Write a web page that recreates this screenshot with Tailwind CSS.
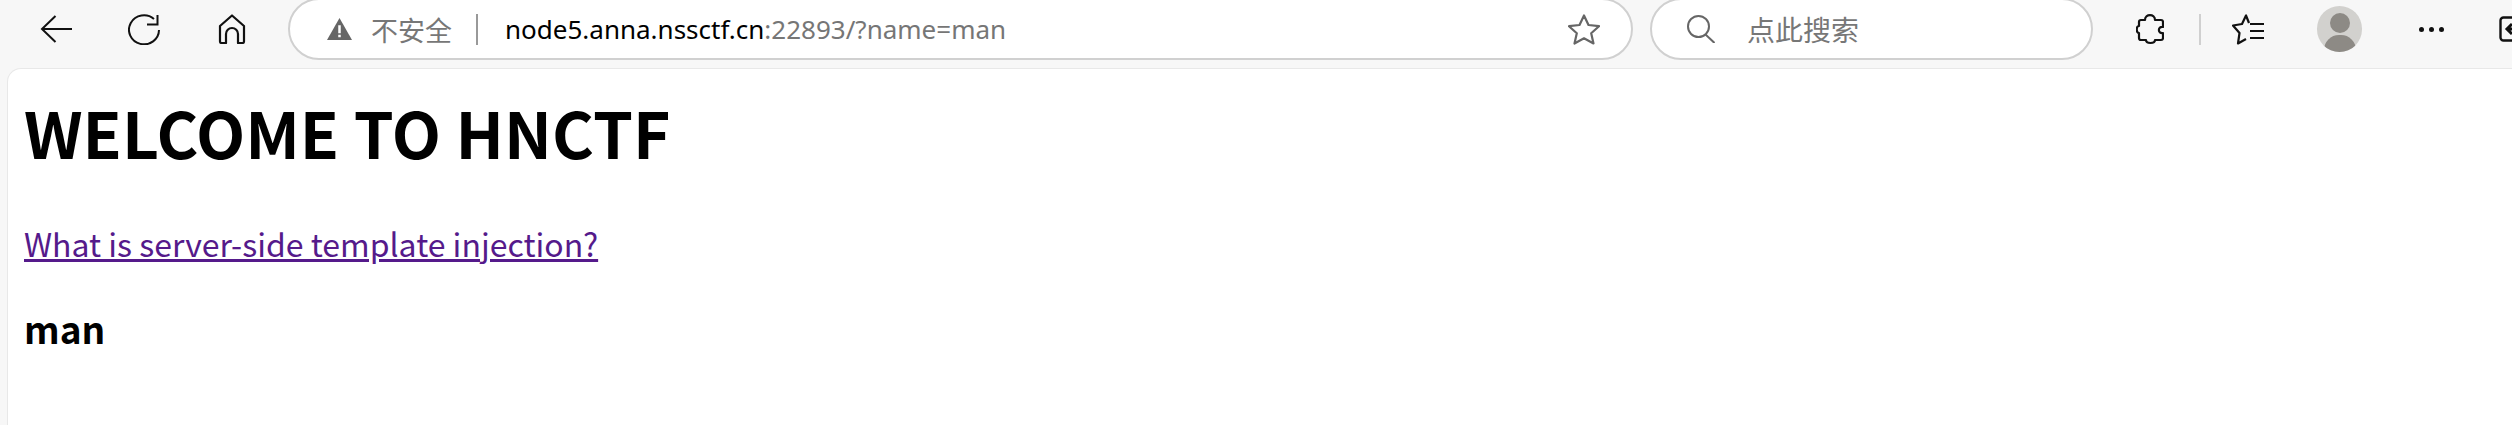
<!DOCTYPE html>
<html lang="en">
<head>
    <meta charset="UTF-8">
    <title>HNCTF</title>
    <script src="https://cdn.jsdelivr.net/npm/@tailwindcss/browser@4"></script>
</head>
<body class="h-[425px] w-[2512px] overflow-hidden bg-[#f7f7f7] font-['Noto_Sans_CJK_SC','Noto_Sans',sans-serif]">
    <!-- toolbar -->
    <header class="flex h-[68px] items-start">
        <div class="flex h-[58px] w-[288px] shrink-0 items-center text-[#111]">
            <button class="ml-[40px]">
                <svg class="block" width="32" height="28" viewBox="0 0 32 28" fill="none" stroke="currentColor" stroke-width="2"><path d="M2 14H32M15.500 1 2 14 15.500 27"/></svg>
            </button>
            <button class="ml-[56px]">
                <svg class="block" width="32" height="31" viewBox="0 0 32 31" fill="none" stroke="currentColor" stroke-width="2"><path d="M31 16a15 14.500 0 1 1-5-11M29.500 1v9.500H19"/></svg>
            </button>
            <button class="ml-[58px]">
                <svg class="block" width="28" height="30" viewBox="0 0 28 30" fill="none" stroke="currentColor" stroke-width="2.200" stroke-linejoin="round"><path d="M2 12 14 1.500 26 12v15.500a1.500 1.500 0 0 1-1.500 1.500H20v-9a6 6 0 0 0-12 0v9H3.500A1.500 1.500 0 0 1 2 27.500Z"/></svg>
            </button>
        </div>

        <!-- address bar -->
        <div class="-mt-[2px] flex h-[62px] w-[1345px] shrink-0 items-center rounded-[31px] border-2 border-[#d0d0d0] bg-white pl-[37px] pr-[31px]">
            <svg class="block" width="25" height="22" viewBox="0 0 24 21"><path d="M12 0 24 21H0Z" fill="#666"/><path d="M10.800 7h2.400v7.500h-2.400Zm0 9h2.400v2.400h-2.400Z" fill="#fff"/></svg>
            <span class="ml-[19px] text-[27px] leading-none text-[#777]">不安全</span>
            <span class="ml-[24px] h-[31px] w-[2px] bg-[#999]"></span>
            <span class="ml-[27px] font-['Noto_Sans',sans-serif] text-[26px] leading-none text-black">node5.anna.nssctf.cn<span class="text-[#767676]">:22893/?name=man</span></span>
            <svg class="ml-auto block" width="32" height="31" viewBox="0 0 32 31" fill="none" stroke="#666" stroke-width="2.200" stroke-linejoin="round"><path d="m16 1.500 4.500 9.500 10.500 1.200-7.800 7.100 2.300 10.200L16 24.300 6.500 29.500l2.300-10.200L1 12.200 11.500 11Z"/></svg>
        </div>

        <!-- search box -->
        <div class="-mt-[2px] ml-[17px] flex h-[62px] w-[443px] shrink-0 items-center rounded-[31px] border-2 border-[#d0d0d0] bg-white pl-[35px]">
            <svg class="block" width="28" height="28" viewBox="0 0 28 28" fill="none" stroke="#666" stroke-width="2"><circle cx="11.500" cy="11.500" r="10.500"/><path d="m18.500 19.500 9 8.500"/></svg>
            <span class="ml-[32px] text-[28px] leading-none text-[#777]">点此搜索</span>
        </div>

        <!-- right icons -->
        <div class="flex h-[58px] flex-1 items-center text-[#111]">
            <svg class="ml-[43px] block shrink-0" width="28" height="31" viewBox="0 0 28 31" fill="none" stroke="currentColor" stroke-width="2.200" stroke-linejoin="round"><path d="M9 6c0-6.500 10-6.500 10 0h6a2 2 0 0 1 2 2v5c-5.500-1-5.500 7 0 6v5a2 2 0 0 1-2 2h-6c0 4-9 4-9 0H5a2 2 0 0 1-2-2v-5c-3 0-3-7 0-7V8a2 2 0 0 1 2-2Z"/></svg>
            <span class="ml-[35px] h-[31px] w-[2px] shrink-0 bg-[#d0d0d0]"></span>
            <svg class="ml-[31px] block shrink-0" width="32" height="31" viewBox="0 0 32 31" fill="none" stroke="currentColor" stroke-width="2.200" stroke-linejoin="round"><path d="M17 9 14 1.500 10 10 1 11.500 7.500 19 6 29.500l8-4.500"/><path d="M18 10h14M18 17h14M18 24h14"/></svg>
            <span class="relative ml-[53px] block h-[46px] w-[45px] shrink-0 overflow-hidden rounded-full bg-[#d2d1ce]">
                <span class="absolute left-[13px] top-[7px] h-[20px] w-[20px] rounded-full bg-[#8d8a85]"></span>
                <span class="absolute left-[7px] top-[29px] h-[30px] w-[32px] rounded-full bg-[#8d8a85]"></span>
            </span>
            <span class="ml-[57px] flex shrink-0 items-center gap-[5px]">
                <span class="h-[5px] w-[5px] rounded-full bg-[#111]"></span>
                <span class="h-[5px] w-[5px] rounded-full bg-[#111]"></span>
                <span class="h-[5px] w-[5px] rounded-full bg-[#111]"></span>
            </span>
            <svg class="ml-[55px] block shrink-0" width="28" height="26" viewBox="0 0 28 26" fill="none" stroke="currentColor" stroke-width="2.400"><rect x="1.500" y="1.500" width="24" height="23" rx="3"/><path d="M20 13H8m5-5-5 5 5 5" stroke-width="3"/></svg>
        </div>
    </header>

    <!-- page content -->
    <main class="ml-[7px] h-[357px] rounded-tl-[14px] border-l border-t border-[#e8e8e8] bg-white pl-[16px]">
        <h1 class="pt-[17px] text-[64px] font-bold leading-[90px] text-black">WELCOME TO HNCTF</h1>
        <p class="mt-[43px] text-[32px] leading-[48px]"><a href="#" class="text-[#551a8b] underline">What is server-side template injection?</a></p>
        <h3 class="mt-[34px] text-[37px] font-bold leading-[54px] text-black">man</h3>
    </main>
</body>
</html>
